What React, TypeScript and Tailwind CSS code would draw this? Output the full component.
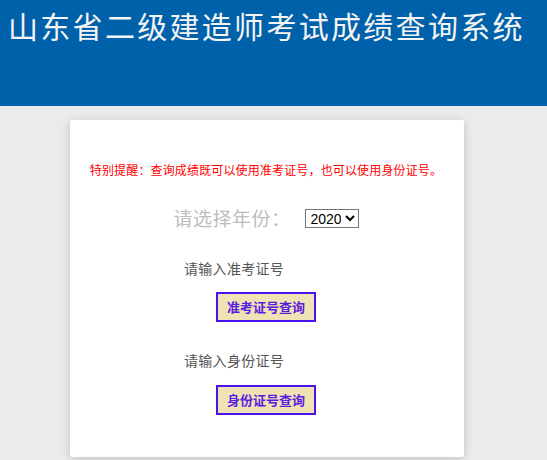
export default function App() {
  return (
    <div
      className="min-h-[460px] bg-[#ebebeb]"
      style={{ fontFamily: '"Noto Sans CJK SC", "Liberation Sans", sans-serif' }}
    >
      <div className="h-[106px] bg-[#0061ab] pl-[8px] pt-[6px]">
        <h1 className="text-[30px] leading-[38px] tracking-[2.3px] text-[#f4f4f4] font-normal">
          山东省二级建造师考试成绩查询系统
        </h1>
      </div>

      <div className="ml-[70px] mt-[14px] w-[394px] h-[337px] bg-white rounded-[2px] shadow-[0_2px_10px_rgba(0,0,0,0.18)]">
        <p className="pt-[41px] text-center text-[12px] leading-[18px] tracking-[0.15px] text-[#ff0000] pr-[2px]">
          特别提醒：查询成绩既可以使用准考证号，也可以使用身份证号。
        </p>

        <div className="mt-[27px] flex items-center justify-center gap-[14px] pr-[2px]">
          <span className="text-[19px] leading-[24px] tracking-[0.5px] text-[#bdbdbd]">请选择年份：</span>
          <select
            defaultValue="2020"
            className="h-[19px] w-[54px] border border-[#767676] text-[14px] leading-[16px] text-black px-[1px]"
            style={{ fontFamily: '"Liberation Sans", Arial, sans-serif' }}
          >
            <option>2020</option>
            <option>2019</option>
          </select>
        </div>

        <p className="mt-[29px] pl-[114px] text-[14px] leading-[18px] tracking-[0.3px] text-[#555]">请输入准考证号</p>
        <div className="mt-[15px] flex justify-center pr-[2px]">
          <button className="h-[30px] w-[100px] border-2 border-[#4a12f0] bg-[#efe2b4] text-[13px] font-bold text-[#5a1de0]">
            准考证号查询
          </button>
        </div>

        <p className="mt-[29px] pl-[114px] text-[14px] leading-[18px] tracking-[0.3px] text-[#555]">请输入身份证号</p>
        <div className="mt-[16px] flex justify-center pr-[2px]">
          <button className="h-[30px] w-[100px] border-2 border-[#4a12f0] bg-[#efe2b4] text-[13px] font-bold text-[#5a1de0]">
            身份证号查询
          </button>
        </div>
      </div>
    </div>
  )
}
